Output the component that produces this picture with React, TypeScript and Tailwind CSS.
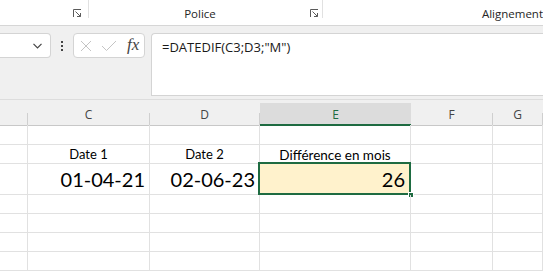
import React from "react";

const cols = "grid grid-cols-[28px_122px_110px_151px_82px_1fr]";

function Launcher() {
    return (
        <svg width="9" height="9" viewBox="0 0 9 9" className="text-[#5a5a5a]">
            <path d="M0.5 8V0.5H8" fill="none" stroke="currentColor" strokeWidth="1" />
            <path d="M2.5 2.5L7.5 7.5M4 7.5H7.5V4" fill="none" stroke="currentColor" strokeWidth="1" />
        </svg>
    );
}

function HeaderCell({ label, active }: { label: string; active?: boolean }) {
    if (active) {
        return (
            <div className="flex h-full flex-col pt-[3px]">
                <div className="flex flex-1 items-center justify-center bg-[#dcdcdc] border-b-2 border-[#1e6b41] text-[12px] text-[#1e6b41] pt-[3px]">
                    {label}
                </div>
            </div>
        );
    }
    return (
        <div className="flex h-full border-b border-[#c8c8c8]">
            <div className="flex flex-1 items-center justify-center text-[12px] text-[#444] pt-[5px]">{label}</div>
            <div className="self-end h-[12px] w-px bg-[#cfcfcf]" />
        </div>
    );
}

function Row({ h, children }: { h: string; children?: React.ReactNode[] }) {
    const cells = children ?? [];
    return (
        <div className={`${cols} ${h} border-b border-[#e1e1e1] shrink-0`}>
            {[0, 1, 2, 3, 4, 5].map((i) => (
                <div key={i} className="border-r border-[#e1e1e1] relative">
                    {cells[i]}
                </div>
            ))}
        </div>
    );
}

export default function App() {
    return (
        <div className="w-[543px] h-[271px] overflow-hidden bg-white flex flex-col font-['Open_Sans',sans-serif]">
            {/* Ribbon */}
            <div className="h-[26px] shrink-0 flex bg-white border-b border-[#d6d6d6]">
                <div className="w-[90px] flex">
                    <div className="flex-1 flex items-center justify-end pr-[6px] pt-[2px]">
                        <Launcher />
                    </div>
                    <div className="w-px h-[18px] bg-[#e1e1e1]" />
                </div>
                <div className="w-[236px] flex">
                    <div className="flex-1 flex items-center pl-[95px] pt-[2px] text-[11.5px] text-[#262626]">
                        <span>Police</span>
                        <span className="ml-auto mr-[3px] flex">
                            <Launcher />
                        </span>
                    </div>
                    <div className="w-px h-[18px] bg-[#e1e1e1]" />
                </div>
                <div className="flex-1 flex items-center pl-[159px] pt-[2px] text-[11.5px] text-[#262626] whitespace-nowrap">
                    Alignement
                </div>
            </div>

            {/* Formula bar */}
            <div className="h-[73px] shrink-0 bg-[#f0f0f0] flex pt-[7px]">
                <div className="flex items-start">
                    <div className="w-[51px] h-[25px] bg-white border border-l-0 border-[#d4d4d4] rounded-r-[4px] flex items-center justify-end pr-[8px]">
                        <svg width="9" height="6" viewBox="0 0 9 6">
                            <path d="M0.5 0.8L4.5 4.8L8.5 0.8" fill="none" stroke="#444" strokeWidth="1.2" />
                        </svg>
                    </div>
                    <div className="w-[22px] h-[25px] flex flex-col items-center justify-center gap-[2px]">
                        <span className="w-[2px] h-[2px] bg-[#444]" />
                        <span className="w-[2px] h-[2px] bg-[#444]" />
                        <span className="w-[2px] h-[2px] bg-[#444]" />
                    </div>
                    <div className="w-[72px] h-[25px] bg-white border border-[#d4d4d4] rounded-[4px] flex items-center pl-[6px]">
                        <svg width="12" height="12" viewBox="0 0 12 12">
                            <path d="M1 1L11 11M11 1L1 11" fill="none" stroke="#c4c4c4" strokeWidth="1" />
                        </svg>
                        <svg width="16" height="12" viewBox="0 0 16 12" className="ml-[9px]">
                            <path d="M1 6L5.5 10.5L15 1" fill="none" stroke="#c4c4c4" strokeWidth="1" />
                        </svg>
                        <span className="ml-[10px] font-['Liberation_Serif',serif] italic text-[17px] leading-none text-[#444] -mt-[2px]">
                            fx
                        </span>
                    </div>
                </div>
                <div className="ml-[6px] flex-1 h-[63px] bg-white border border-r-0 border-[#d4d4d4] rounded-tl-[4px] pl-[10px] pt-[4px] text-[13px] leading-[18px] text-[#1a1a1a] whitespace-nowrap">
                    =DATEDIF(C3;D3;"M")
                </div>
            </div>
            <div className="h-px shrink-0 bg-[#dddddd]" />

            {/* Column headers */}
            <div className={`${cols} h-[25px] shrink-0 bg-[#f0f0f0]`}>
                <HeaderCell label="" />
                <HeaderCell label="C" />
                <HeaderCell label="D" />
                <HeaderCell label="E" active />
                <HeaderCell label="F" />
                <HeaderCell label="G" />
            </div>

            {/* Grid */}
            <div className="flex flex-col font-['Lato',sans-serif] text-black">
                <Row h="h-[20px]" />
                <Row h="h-[19px]">
                    {[
                        null,
                        <div className="h-full flex items-center justify-center text-[13px]">Date 1</div>,
                        <div className="h-full flex items-center justify-center text-[13px]">Date 2</div>,
                        <div className="h-full flex items-center justify-center text-[13.5px]">Différence en mois</div>,
                    ]}
                </Row>
                <Row h="h-[31px]">
                    {[
                        null,
                        <div className="h-full flex items-center justify-end pr-[4px] text-[20px]">01-04-21</div>,
                        <div className="h-full flex items-center justify-end pr-[4px] text-[20px]">02-06-23</div>,
                        <div className="h-full bg-[#fff2cc]">
                            <div className="h-full flex items-center justify-end pr-[5px] text-[20px]">26</div>
                            <div className="absolute -left-[2px] -top-[2px] -right-px -bottom-px border-2 border-[#1e6b41]" />
                            <div className="absolute -right-[4px] -bottom-[4px] w-[6px] h-[6px] bg-[#1e6b41] border border-white" />
                        </div>,
                    ]}
                </Row>
                <Row h="h-[19px]" />
                <Row h="h-[19px]" />
                <Row h="h-[19px]" />
                <Row h="h-[19px]" />
            </div>
        </div>
    );
}
